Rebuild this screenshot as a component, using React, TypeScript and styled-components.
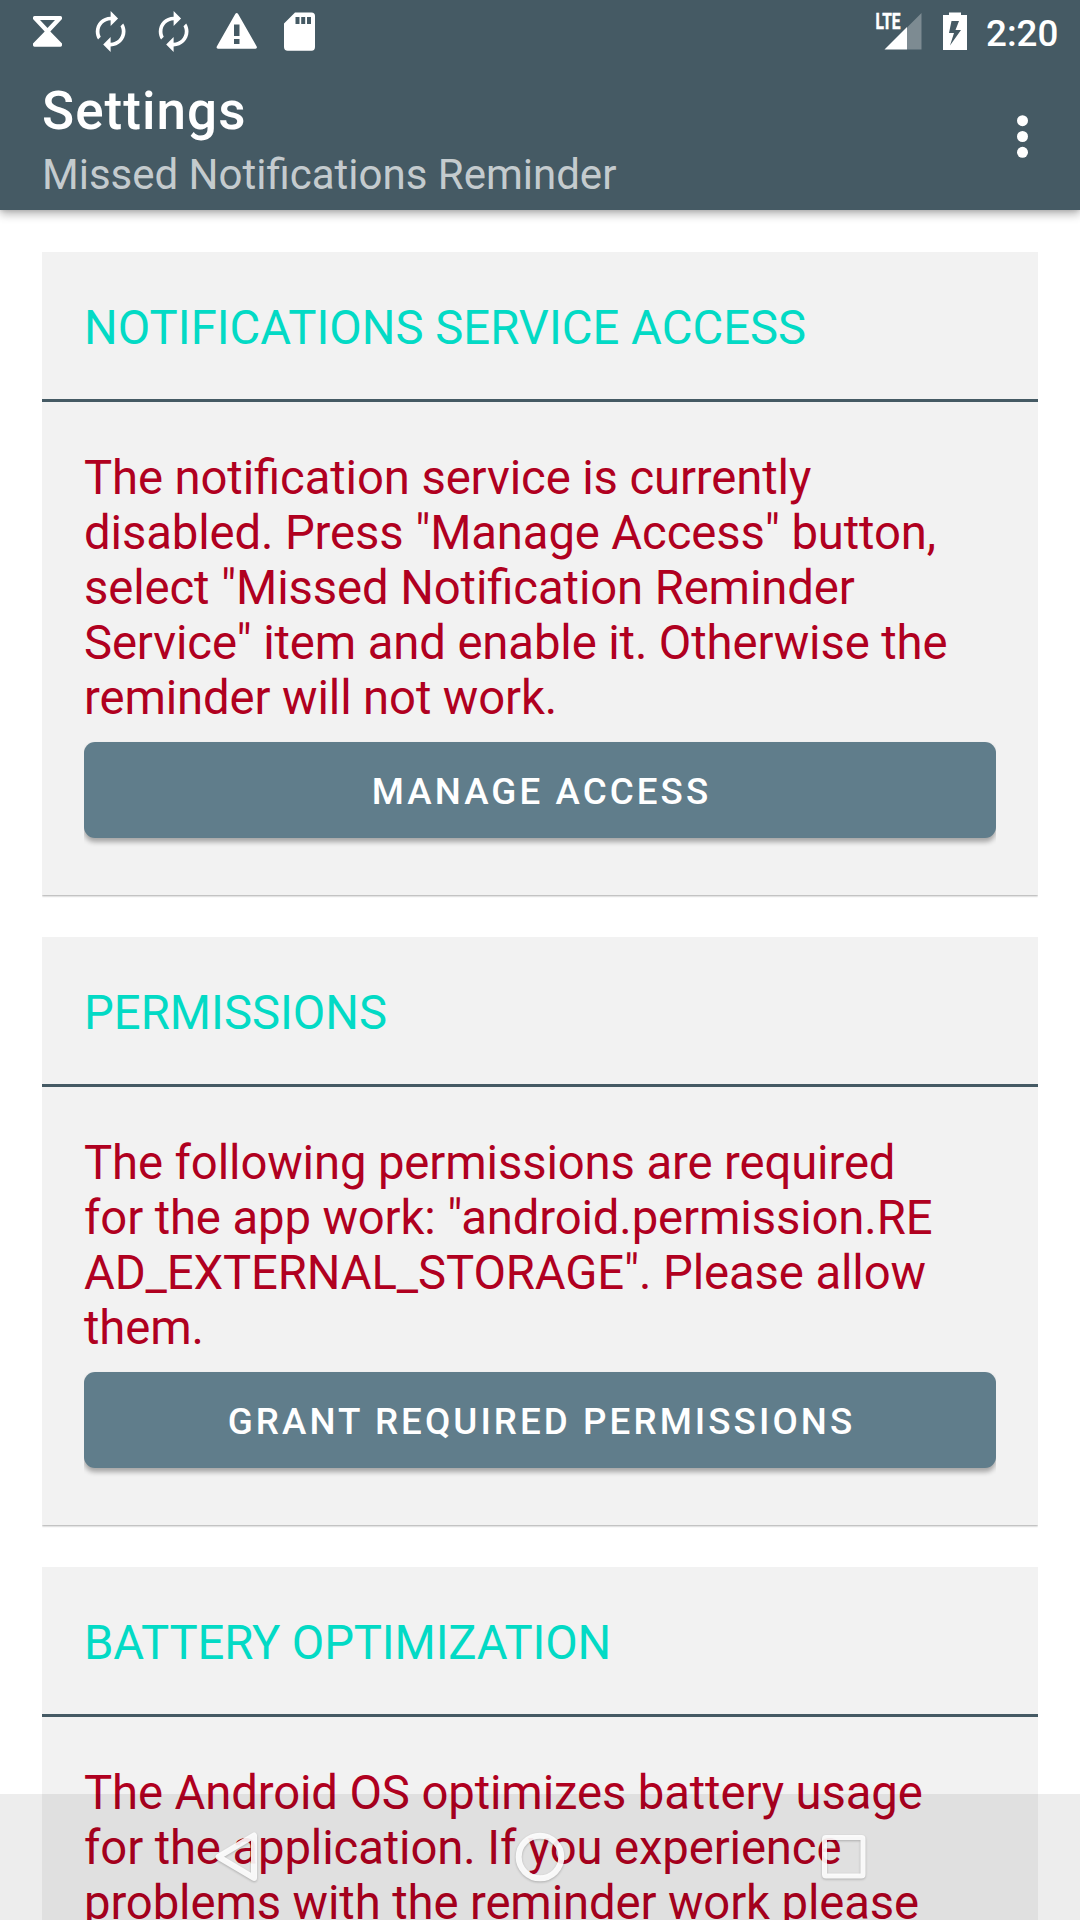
import React from "react";
import styled, { createGlobalStyle } from "styled-components";

const GlobalStyle = createGlobalStyle`
  * { box-sizing: border-box; }
  html, body { margin: 0; padding: 0; background: #fff; overflow: hidden; }
  body { font-family: Roboto, "Liberation Sans", sans-serif; }
`;

const Screen = styled.div`
  position: relative;
  display: flex;
  flex-direction: column;
  width: 1080px;
  height: 1920px;
  overflow: hidden;
  background: #fff;
`;

const Header = styled.header`
  flex: none;
  height: 210px;
  background: #455a64;
  color: #fff;
  z-index: 1;
  box-shadow: 0 4px 9px rgba(0, 0, 0, 0.3), 0 0 4px rgba(0, 0, 0, 0.14);
`;

const StatusBar = styled.div`
  display: flex;
  justify-content: space-between;
  height: 63px;
`;

const StatusIcons = styled.svg`
  display: block;
  height: 63px;
`;

const StatusRight = styled.div`
  display: flex;
`;

const Clock = styled.span`
  width: 94px;
  font-size: 36.75px;
  font-weight: 500;
  line-height: 67px;
`;

const Toolbar = styled.div`
  display: flex;
  justify-content: space-between;
  height: 147px;
  padding-left: 42px;
`;

const Titles = styled.div`
  display: flex;
  flex-direction: column;
  padding-top: 17px;
`;

const Title = styled.h1`
  margin: 0;
  font-size: 53px;
  font-weight: 500;
  line-height: 62px;
  letter-spacing: 1.05px;
`;

const Subtitle = styled.div`
  margin-top: 8px;
  font-size: 42px;
  line-height: 49px;
  color: rgba(255, 255, 255, 0.7);
`;

const MenuButton = styled.button`
  width: 105px;
  height: 147px;
  padding: 0;
  border: 0;
  background: none;
`;

const Content = styled.main`
  display: flex;
  flex-direction: column;
  gap: 42px;
  padding: 42px;
`;

const Card = styled.section`
  flex: none;
  background: #f2f2f2;
  padding-bottom: 57px;
  box-shadow: 0 1px 2px rgba(0, 0, 0, 0.35);
  clip-path: inset(0 0 -5px 0);
`;

const CardTitle = styled.h2<{ $tracking?: number }>`
  margin: 0;
  height: 150px;
  padding: 49px 42px 0;
  border-bottom: 3px solid #455a64;
  font-size: 47.25px;
  font-weight: 400;
  line-height: 55px;
  letter-spacing: ${({ $tracking = 0 }) => $tracking}px;
  color: #03dac5;
`;

const Message = styled.p`
  margin: 0;
  padding: 49px 42px 16px;
  font-size: 47.25px;
  line-height: 55px;
  letter-spacing: -0.12px;
  font-feature-settings: "liga" 1;
  color: #b00020;
  white-space: pre;
`;

const ActionButton = styled.button`
  display: block;
  width: 912px;
  height: 96px;
  margin: 0 42px;
  padding: 2px 0 0 3px;
  border: 0;
  border-radius: 11px;
  background: #607d8b;
  color: #fff;
  font: 500 36.75px/43px Roboto, sans-serif;
  letter-spacing: 3.06px;
  box-shadow: 0 4px 5px rgba(0, 0, 0, 0.32);
  clip-path: inset(-2px 0 -10px 0);
`;

const NavigationBar = styled.nav`
  position: absolute;
  inset: auto 0 0;
  height: 126px;
  background: rgba(0, 0, 0, 0.07);
`;

const NavIcons = styled.svg`
  display: block;
  filter: drop-shadow(0 1px 1px rgba(0, 0, 0, 0.25));
`;

const SYNC = "M12 6v3l4-4-4-4v3c-4.42 0-8 3.58-8 8 0 1.57.46 3.03 1.24 4.26L6.7 14.8c-.45-.83-.7-1.79-.7-2.8 0-3.31 2.69-6 6-6zm6.76 1.74L17.3 9.2c.44.84.7 1.79.7 2.8 0 3.31-2.69 6-6 6v-3l-4 4 4 4v-3c4.42 0 8-3.58 8-8 0-1.57-.46-3.03-1.24-4.26z";

const cards = [
  {
    title: "NOTIFICATIONS SERVICE ACCESS",
    lines: [
      "The notification service is currently",
      'disabled. Press "Manage Access" button,',
      'select "Missed Notification Reminder',
      'Service" item and enable it. Otherwise the',
      "reminder will not work.",
    ],
    action: "MANAGE ACCESS",
  },
  {
    title: "PERMISSIONS",
    lines: [
      "The following permissions are required",
      'for the app work: "android.permission.RE',
      'AD_EXTERNAL_STORAGE". Please allow',
      "them.",
    ],
    action: "GRANT REQUIRED PERMISSIONS",
  },
  {
    title: "BATTERY OPTIMIZATION",
    tracking: -0.15,
    lines: [
      "The Android OS optimizes battery usage",
      "for the application. If you experience",
      "problems with the reminder work please",
    ],
  },
];

export default function App() {
  return (
    <Screen>
      <GlobalStyle />
      <Header>
        <StatusBar>
          <StatusIcons width="330" viewBox="0 0 330 63" fill="#fff">
            <path fillRule="evenodd" d="M34.500 16H60.500Q62 16 62 17.500V19L50.300 31.500L62 43.500V45.300Q62 46.700 60.500 46.700H34.500Q33 46.700 33 45.300V43.500L44.700 31.500L33 19V17.500Q33 16 34.500 16ZM40 20L47.500 28L55 20Z" />
            <g transform="translate(88.300 9.200) scale(1.86)"><path d={SYNC} /></g>
            <g transform="translate(151.300 9.200) scale(1.86)"><path d={SYNC} /></g>
            <path fillRule="evenodd" d="M235.400 13.800Q236.700 12 238 13.800L256.700 46.500Q257.500 48.500 255.500 48.700H218Q216 48.500 216.800 46.500ZM234 24.500V36H239.500V24.500ZM234 39V44H239.500V39Z" />
            <path fillRule="evenodd" d="M295 12.500H311.500Q315 12.500 315 16V47Q315 50.700 311.500 50.700H287.700Q284 50.700 284 47V23.500ZM295.500 17V24H299.500V17ZM301.200 17V24H305.200V17ZM307 17V24H311V17Z" />
          </StatusIcons>
          <StatusRight>
            <StatusIcons width="114" viewBox="872 0 114 63" fill="#fff">
              <text x="875.500" y="29" fontFamily="Roboto" fontWeight="700" fontSize="21.800" textLength="25" lengthAdjust="spacingAndGlyphs" stroke="#fff" strokeWidth=".5">LTE</text>
              <path d="M907 27.500L921.500 13V49.500H907Z" opacity=".3" />
              <path d="M907 27V49.500H884.500Z" />
              <path fillRule="evenodd" d="M949 12.500H961V15H967V50H943V15H949ZM951.500 21L949 33H954L950 45.500L961 30H955.500L959 21Z" />
            </StatusIcons>
            <Clock>2:20</Clock>
          </StatusRight>
        </StatusBar>
        <Toolbar>
          <Titles>
            <Title>Settings</Title>
            <Subtitle>Missed Notifications Reminder</Subtitle>
          </Titles>
          <MenuButton aria-label="More options">
            <svg width="105" height="147" fill="#fff">
              <circle cx="47.500" cy="57.700" r="5.500" />
              <circle cx="47.500" cy="73.500" r="5.500" />
              <circle cx="47.500" cy="89.300" r="5.500" />
            </svg>
          </MenuButton>
        </Toolbar>
      </Header>
      <Content>
        {cards.map((card) => (
          <Card key={card.title}>
            <CardTitle $tracking={card.tracking}>{card.title}</CardTitle>
            <Message>{card.lines.join("\n")}</Message>
            {card.action && <ActionButton>{card.action}</ActionButton>}
          </Card>
        ))}
      </Content>
      <NavigationBar>
        <NavIcons width="1080" height="126" fill="none" stroke="#fff" strokeOpacity=".9" strokeWidth="6" strokeLinejoin="round">
          <path d="M254 41.500V84L218.500 62.800Z" />
          <circle cx="540" cy="63" r="21.300" />
          <rect x="824.500" y="43.500" width="38.500" height="38.500" rx="1.500" strokeWidth="5" />
        </NavIcons>
      </NavigationBar>
    </Screen>
  );
}
